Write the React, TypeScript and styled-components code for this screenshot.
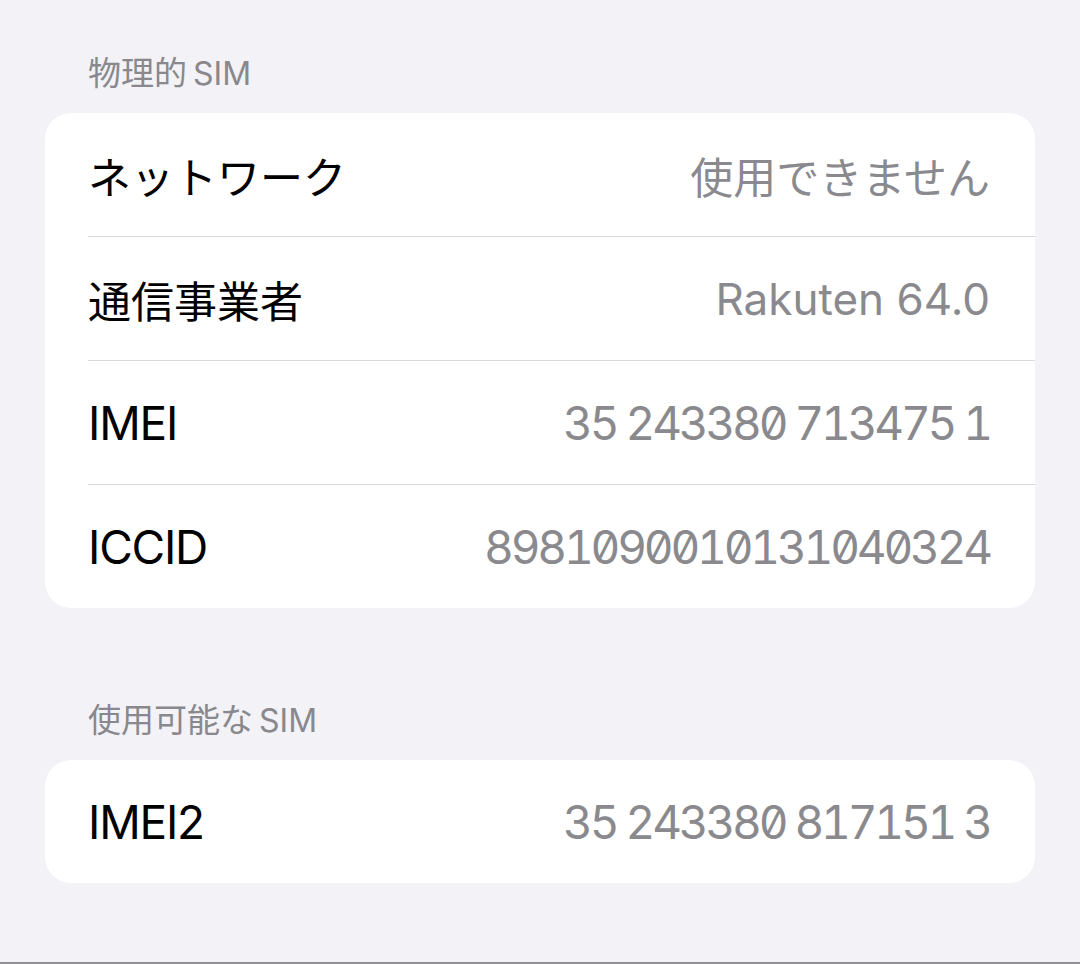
import { FC } from 'react';
import styled, { createGlobalStyle } from 'styled-components';

const GlobalStyle = createGlobalStyle`
  html, body {
    margin: 0;
    padding: 0;
    background: #f2f2f7;
  }
  * {
    box-sizing: border-box;
  }
`;

type ValueKind = 'cjk' | 'text' | 'digits';

interface Row {
  label: string;
  value: string;
  labelCjk?: boolean;
  valueKind?: ValueKind;
}

const physicalRows: Row[] = [
  { label: 'ネットワーク', value: '使用できません', labelCjk: true, valueKind: 'cjk' },
  { label: '通信事業者', value: 'Rakuten 64.0', labelCjk: true, valueKind: 'text' },
  { label: 'IMEI', value: '35 243380 713475 1', valueKind: 'digits' },
  { label: 'ICCID', value: '8981090010131040324', valueKind: 'digits' },
];

const availableRows: Row[] = [
  { label: 'IMEI2', value: '35 243380 817151 3', valueKind: 'digits' },
];

const Page = styled.main`
  height: 964px;
  padding: 53px 45px 0;
  border-bottom: 2px solid #8e8e93;
  font-family: Inter, 'Noto Sans CJK JP', sans-serif;
`;

const Section = styled.section`
  & + & {
    margin-top: 92px;
  }
`;

const SectionHeader = styled.h2`
  margin: 0 0 20px;
  padding-left: 43px;
  height: 40px;
  line-height: 40px;
  font-size: 32px;
  font-weight: 400;
  color: #88888d;
  font-family: Inter, 'Noto Sans CJK JP', sans-serif;
`;

const CjkPart = styled.span`
  font-size: 33px;
  margin-right: 6px;
`;

const Card = styled.div`
  background: #ffffff;
  border-radius: 26px;
  overflow: hidden;
`;

const RowItem = styled.div`
  position: relative;
  height: 123px;
  padding: 0 45px 0 43px;
  display: flex;
  align-items: center;
  justify-content: space-between;
  & + &::before {
    content: '';
    position: absolute;
    top: -1px;
    left: 43px;
    right: 0;
    height: 1px;
    background: #d9d9dd;
  }
  & + & {
    margin-top: 1px;
  }
`;

const Label = styled.span<{ $cjk?: boolean }>`
  font-size: ${({ $cjk }) => ($cjk ? '43px' : '46px')};
  letter-spacing: ${({ $cjk }) => ($cjk ? '0' : '-1.2px')};
  color: #000000;
  white-space: nowrap;
`;

const valueSize: Record<ValueKind, string> = {
  cjk: '43px',
  text: '44px',
  digits: '46px',
};

const Value = styled.span<{ $kind: ValueKind }>`
  font-size: ${({ $kind }) => valueSize[$kind]};
  letter-spacing: ${({ $kind }) => ($kind === 'digits' ? '-3.2px' : '0')};
  color: #8a8a8e;
  white-space: nowrap;
  font-feature-settings: ${({ $kind }) =>
    $kind === 'digits' ? '"tnum" 1, "zero" 1' : 'normal'};
`;

const SectionTitle: FC<{ cjk: string; latin: string }> = ({ cjk, latin }) => (
  <SectionHeader>
    <CjkPart>{cjk}</CjkPart>
    {latin}
  </SectionHeader>
);

const InfoCard: FC<{ rows: Row[] }> = ({ rows }) => (
  <Card>
    {rows.map((row) => (
      <RowItem key={row.label}>
        <Label $cjk={row.labelCjk}>{row.label}</Label>
        <Value $kind={row.valueKind ?? 'text'}>{row.value}</Value>
      </RowItem>
    ))}
  </Card>
);

export default function App() {
  return (
    <>
      <GlobalStyle />
      <Page>
        <Section>
          <SectionTitle cjk="物理的" latin="SIM" />
          <InfoCard rows={physicalRows} />
        </Section>
        <Section>
          <SectionTitle cjk="使用可能な" latin="SIM" />
          <InfoCard rows={availableRows} />
        </Section>
      </Page>
    </>
  );
}
